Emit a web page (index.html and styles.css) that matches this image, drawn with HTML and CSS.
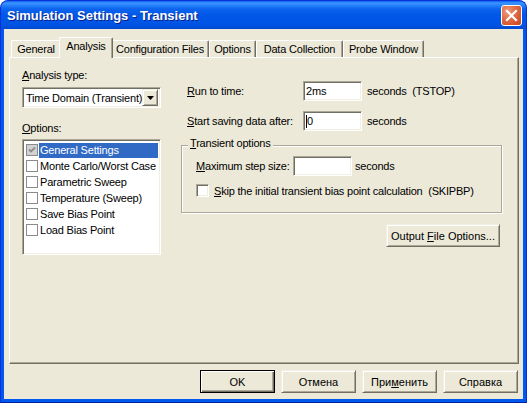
FILE: index.html
```html
<!DOCTYPE html>
<html lang="en">
<head>
    <meta charset="UTF-8">
    <meta name="viewport" content="width=device-width, initial-scale=1.0">
    <title>Simulation Settings - Transient</title>
    <link rel="stylesheet" href="styles.css">
</head>
<body>

    <div class="window">

        <!-- Title Bar -->
        <div class="titlebar">
            <span class="title">Simulation Settings - Transient</span>
            <span class="close-btn">
                <svg width="19" height="19" viewBox="0 0 19 19">
                    <path d="M5 5 L14 14 M14 5 L5 14" stroke="#fff" stroke-width="2.2" stroke-linecap="square"/>
                </svg>
            </span>
        </div>

        <div class="client">

            <!-- Tabs -->
            <div class="tabs">
                <div class="tab">General</div>
                <div class="tab active">Analysis</div>
                <div class="tab">Configuration Files</div>
                <div class="tab">Options</div>
                <div class="tab">Data Collection</div>
                <div class="tab">Probe Window</div>
            </div>

            <div class="panel">

                <!-- Left Column -->
                <div class="left-col">
                    <div class="field-label"><u>A</u>nalysis type:</div>
                    <div class="combo">
                        <span class="combo-text">Time Domain (Transient)</span>
                        <span class="combo-btn">
                            <svg width="7" height="4" viewBox="0 0 7 4"><path d="M0 0 H7 L3.5 4 Z" fill="#000"/></svg>
                        </span>
                    </div>

                    <div class="field-label options-label"><u>O</u>ptions:</div>
                    <div class="listbox">
                        <div class="list-item selected">
                            <span class="list-check checked">
                                <svg width="10" height="10" viewBox="0 0 10 10"><path d="M2 4.5 L4 6.5 L8 2.5" stroke="#8d8d8d" stroke-width="1.8" fill="none"/></svg>
                            </span>
                            <span class="item-label">General Settings</span>
                        </div>
                        <div class="list-item">
                            <span class="list-check"></span>
                            <span class="item-label">Monte Carlo/Worst Case</span>
                        </div>
                        <div class="list-item">
                            <span class="list-check"></span>
                            <span class="item-label">Parametric Sweep</span>
                        </div>
                        <div class="list-item">
                            <span class="list-check"></span>
                            <span class="item-label">Temperature (Sweep)</span>
                        </div>
                        <div class="list-item">
                            <span class="list-check"></span>
                            <span class="item-label">Save Bias Point</span>
                        </div>
                        <div class="list-item">
                            <span class="list-check"></span>
                            <span class="item-label">Load Bias Point</span>
                        </div>
                    </div>
                </div>

                <!-- Right Column -->
                <div class="right-col">
                    <div class="row">
                        <span class="row-label"><u>R</u>un to time:</span>
                        <span class="edit">2ms</span>
                        <span class="unit">seconds&nbsp; (TSTOP)</span>
                    </div>
                    <div class="row second">
                        <span class="row-label"><u>S</u>tart saving data after:</span>
                        <span class="edit"><span class="caret"></span>0</span>
                        <span class="unit">seconds</span>
                    </div>

                    <fieldset class="group">
                        <legend><u>T</u>ransient options</legend>
                        <div class="row inner">
                            <span class="row-label short"><u>M</u>aximum step size:</span>
                            <span class="edit"></span>
                            <span class="unit near">seconds</span>
                        </div>
                        <div class="check-row">
                            <span class="checkbox"></span>
                            <span><u>S</u>kip the initial transient bias point calculation&nbsp; (SKIPBP)</span>
                        </div>
                    </fieldset>

                    <div class="output-row">
                        <button class="btn btn-output">Output <u>F</u>ile Options...</button>
                    </div>
                </div>
            </div>

            <!-- Dialog Buttons -->
            <div class="dialog-buttons">
                <button class="btn btn-default">OK</button>
                <button class="btn">Отмена</button>
                <button class="btn">При<u>м</u>енить</button>
                <button class="btn">Справка</button>
            </div>
        </div>
    </div>

</body>
</html>
```

FILE: styles.css
```css
* {
    margin: 0;
    padding: 0;
    box-sizing: border-box;
}

body {
    font-family: 'Liberation Sans', Arial, sans-serif;
    font-size: 11px;
    letter-spacing: -0.2px;
    color: #000;
    background-color: #fff;
}

/* Window Frame */
.window {
    width: 527px;
    height: 403px;
    display: flex;
    flex-direction: column;
    border: 1px solid #0831D9;
    border-bottom-color: #00219C;
    border-radius: 8px 8px 0 0;
    background-color: #0055E5;
    overflow: hidden;
}

.titlebar {
    height: 28px;
    display: flex;
    align-items: center;
    justify-content: space-between;
    padding: 0 4px 0 6px;
    background: linear-gradient(to bottom, #0A61F2 0, #3D95FF 2px, #2A84FC 4px, #0C64EE 8px, #0057E7 14px, #0055E5 22px, #0150DC 26px, #0046CF 28px);
}

.title {
    color: #fff;
    font-size: 13px;
    font-weight: bold;
    letter-spacing: 0;
    text-shadow: 1px 1px #0A1E86;
}

.close-btn {
    width: 21px;
    height: 21px;
    margin-top: 1px;
    display: flex;
    border: 1px solid #fff;
    border-radius: 3px;
    background: radial-gradient(circle at 30% 30%, #EE9C80 0, #E06A45 45%, #C8431C 100%);
}

/* Client Area */
.client {
    flex: 1;
    display: flex;
    flex-direction: column;
    background-color: #ECE9D8;
    border: solid #0058EE;
    border-width: 0 3px 3px;
    padding: 8px 4px 6px 5px;
}

/* Tabs */
.tabs {
    display: flex;
    align-items: flex-end;
    height: 20px;
    padding-left: 2px;
}

.tab {
    height: 17px;
    display: flex;
    align-items: center;
    justify-content: center;
    background-color: #ECE9D8;
    border-top: 1px solid #fff;
    border-left: 1px solid #fff;
    border-right: 1px solid #716F64;
    box-shadow: inset -1px 0 #ACA899;
    border-radius: 2px 2px 0 0;
    white-space: nowrap;
}

.tab:nth-child(1) { width: 50px; }
.tab:nth-child(2) { width: 54px; }
.tab:nth-child(3) { width: 98px; }
.tab:nth-child(4) { width: 47px; }
.tab:nth-child(5) { width: 87px; }
.tab:nth-child(6) { width: 81px; }

.tab.active {
    height: 21px;
    margin: 0 -2px -1px;
    padding-bottom: 4px;
    position: relative;
    z-index: 1;
}

.panel {
    flex: 1;
    display: flex;
    gap: 20px;
    padding: 11px 16px 0 12px;
    border: 1px solid;
    border-color: #fff #716F64 #716F64 #fff;
    box-shadow: inset -1px -1px #ACA899;
}

/* Left Column */
.left-col {
    width: 139px;
    display: flex;
    flex-direction: column;
}

.field-label {
    line-height: 13px;
    height: 13px;
    margin-bottom: 5px;
}

.options-label {
    margin-top: 14px;
    margin-bottom: 4px;
}

.combo, .listbox, .edit, .checkbox {
    background-color: #fff;
    border: 1px solid;
    border-color: #ACA899 #fff #fff #ACA899;
    box-shadow: inset 1px 1px #716F64, inset -1px -1px #F1EFE2;
}

.combo {
    height: 21px;
    display: flex;
    align-items: center;
    padding: 2px;
}

.combo-text {
    flex: 1;
    padding-left: 1px;
    white-space: nowrap;
}

.combo-btn {
    width: 16px;
    height: 17px;
    display: flex;
    align-items: center;
    justify-content: center;
    background-color: #ECE9D8;
    border: 1px solid;
    border-color: #F1EFE2 #716F64 #716F64 #F1EFE2;
    box-shadow: inset 1px 1px #fff, inset -1px -1px #ACA899;
}

.listbox {
    height: 116px;
    padding: 2px;
}

.list-item {
    height: 16px;
    display: flex;
    align-items: center;
    padding-left: 1px;
}

.list-check {
    width: 12px;
    height: 12px;
    display: flex;
    align-items: center;
    justify-content: center;
    border: 1px solid #8A8A8A;
    background-color: #fff;
}

.list-check.checked {
    background-color: #D2D2D2;
}

.item-label {
    flex: 1;
    height: 15px;
    line-height: 15px;
    margin-left: 1px;
    padding-left: 1px;
    white-space: nowrap;
}

.list-item.selected .item-label {
    background-color: #316AC5;
    color: #fff;
}

/* Right Column */
.right-col {
    flex: 1;
    display: flex;
    flex-direction: column;
    padding-top: 12px;
}

.row {
    height: 20px;
    display: flex;
    align-items: center;
    padding-left: 6px;
}

.row.second {
    margin-top: 10px;
}

.row-label {
    width: 116px;
}

.row-label.short {
    width: 97px;
}

.row.inner {
    padding-left: 0;
}

.edit {
    width: 59px;
    height: 20px;
    display: flex;
    align-items: center;
    padding-left: 2px;
}

.caret {
    width: 1px;
    height: 13px;
    background-color: #000;
}

.unit {
    margin-left: 5px;
}

.unit.near {
    margin-left: 3px;
}

/* Group Box */
.group {
    margin-top: 6px;
    padding: 3px 14px 15px;
    border: 1px solid #ACA899;
    box-shadow: inset 1px 1px #fff, 1px 1px #fff;
}

.group legend {
    margin-left: -8px;
    padding: 0 2px 3px;
    line-height: 13px;
    background-color: #ECE9D8;
}

.check-row {
    height: 13px;
    display: flex;
    align-items: center;
    margin-top: 8px;
}

.checkbox {
    width: 13px;
    height: 13px;
    margin-right: 5px;
}

.output-row {
    display: flex;
    justify-content: flex-end;
    margin-top: 11px;
    padding-right: 2px;
}

/* Buttons */
.btn {
    width: 75px;
    height: 23px;
    font: inherit;
    color: #000;
    background-color: #ECE9D8;
    border: 1px solid;
    border-color: #F1EFE2 #716F64 #716F64 #F1EFE2;
    box-shadow: inset 1px 1px #fff, inset -1px -1px #ACA899;
}

.btn-output {
    width: 114px;
}

.btn-default {
    border-color: #000;
    box-shadow: inset 1px 1px #fff, inset -1px -1px #716F64, inset -2px -2px #ACA899;
}

.dialog-buttons {
    display: flex;
    justify-content: flex-end;
    gap: 6px;
    margin-top: 6px;
    padding-right: 1px;
}
```
